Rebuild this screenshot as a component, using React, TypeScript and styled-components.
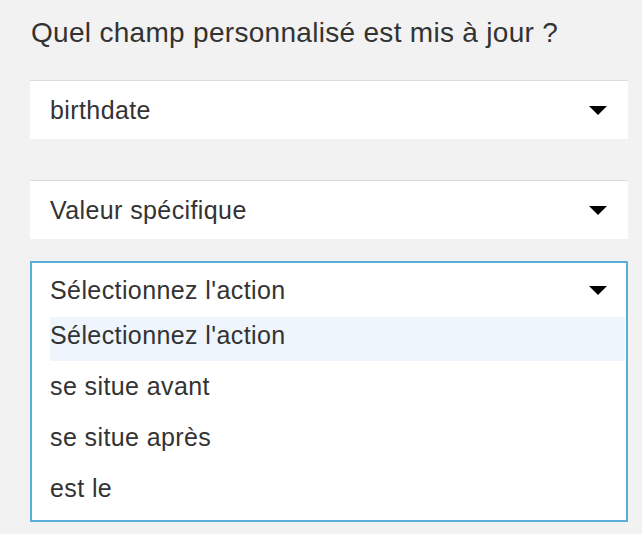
import React from "react";
import styled, { createGlobalStyle } from "styled-components";

const GlobalStyle = createGlobalStyle`
  html, body {
    margin: 0;
    padding: 0;
    background: #f2f2f2;
  }
  body {
    font-family: "Liberation Sans", Arial, Helvetica, sans-serif;
    color: #333;
  }
`;

const Page = styled.div`
  width: 598px;
  padding: 0 0 0 30px;
  display: flex;
  flex-direction: column;
`;

const Title = styled.h2`
  margin: 16px 0 0 1px;
  font-size: 28px;
  font-weight: 400;
  line-height: 34px;
  letter-spacing: 0.3px;
  color: #333;
`;

const SelectBox = styled.div<{ $mt: number }>`
  margin-top: ${(p) => p.$mt}px;
  height: 58px;
  background: #fff;
  border-top: 1px solid #dcdcdc;
  display: flex;
  align-items: center;
  justify-content: space-between;
  padding: 0 21px 0 20px;
  font-size: 25px;
  letter-spacing: 0.4px;
`;

const Caret = styled.span`
  width: 0;
  height: 0;
  border-left: 9px solid transparent;
  border-right: 9px solid transparent;
  border-top: 9px solid #000;
`;

const OpenSelect = styled.div`
  margin-top: 22px;
  background: #fff;
  border: 2px solid #5aafd6;
  display: flex;
  flex-direction: column;
  padding-bottom: 6px;
`;

const OpenHeader = styled.div`
  height: 54px;
  display: flex;
  align-items: center;
  justify-content: space-between;
  padding: 0 19px 0 18px;
  font-size: 25px;
  letter-spacing: 0.4px;
`;

const OptionList = styled.ul`
  list-style: none;
  margin: 0;
  padding: 0 1px 0 18px;
  display: flex;
  flex-direction: column;
  gap: 7px;
`;

const Option = styled.li<{ $active?: boolean }>`
  height: 44px;
  box-sizing: border-box;
  padding-bottom: 8px;
  display: flex;
  align-items: center;
  font-size: 25px;
  letter-spacing: 0.4px;
  background: ${(p) => (p.$active ? "#eef5fd" : "transparent")};
`;

const options = [
  "Sélectionnez l'action",
  "se situe avant",
  "se situe après",
  "est le",
];

export default function App() {
  return (
    <>
      <GlobalStyle />
      <Page>
        <Title>Quel champ personnalisé est mis à jour ?</Title>
        <SelectBox $mt={30}>
          <span>birthdate</span>
          <Caret />
        </SelectBox>
        <SelectBox $mt={41}>
          <span>Valeur spécifique</span>
          <Caret />
        </SelectBox>
        <OpenSelect>
          <OpenHeader>
            <span>Sélectionnez l'action</span>
            <Caret />
          </OpenHeader>
          <OptionList>
            {options.map((o, i) => (
              <Option key={o} $active={i === 0}>
                {o}
              </Option>
            ))}
          </OptionList>
        </OpenSelect>
      </Page>
    </>
  );
}
